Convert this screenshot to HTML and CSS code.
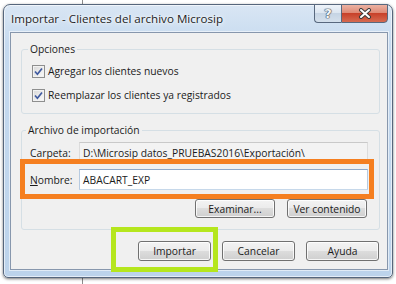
FILE: index.html
```html
<!DOCTYPE html>
<html lang="es">
<head>
    <meta charset="UTF-8">
    <title>Importar - Clientes del archivo Microsip</title>
    <link rel="stylesheet" href="styles.css">
</head>
<body>
    <div class="window">
        <div class="titlebar">
            <span class="title">Importar - Clientes del archivo Microsip</span>
            <div class="caption">
                <span class="cap-btn help">?</span>
                <span class="cap-btn close">
                    <svg width="14" height="11" viewBox="0 0 14 11">
                        <path d="M3 2 L11 9 M11 2 L3 9" stroke="#3a3a3a" stroke-width="4" stroke-linecap="round"/>
                        <path d="M3 2 L11 9 M11 2 L3 9" stroke="#fff" stroke-width="2" stroke-linecap="round"/>
                    </svg>
                </span>
            </div>
        </div>
        <div class="client">
            <fieldset class="group options">
                <legend>Opciones</legend>
                <label class="check">
                    <span class="box"><svg width="9" height="9" viewBox="0 0 9 9"><path d="M1 4.5 L3.4 7.2 L8 1.5" fill="none" stroke="#3f5aa0" stroke-width="1.7"/></svg></span>
                    Agregar los clientes nuevos
                </label>
                <label class="check">
                    <span class="box"><svg width="9" height="9" viewBox="0 0 9 9"><path d="M1 4.5 L3.4 7.2 L8 1.5" fill="none" stroke="#3f5aa0" stroke-width="1.7"/></svg></span>
                    Reemplazar los clientes ya registrados
                </label>
            </fieldset>
            <fieldset class="group file">
                <legend>Archivo de importación</legend>
                <div class="field-row">
                    <span class="field-label">Carpeta:</span>
                    <span class="input readonly">D:\Microsip datos_PRUEBAS2016\Exportación\</span>
                </div>
                <div class="field-row">
                    <span class="field-label"><u>N</u>ombre:</span>
                    <span class="input">ABACART_EXP</span>
                </div>
                <div class="row-buttons">
                    <button class="btn wide">Examinar...</button>
                    <button class="btn wide">Ver contenido</button>
                </div>
            </fieldset>
            <div class="dialog-buttons">
                <button class="btn">Importar</button>
                <button class="btn">Cancelar</button>
                <button class="btn">Ayuda</button>
            </div>
            <!-- marcas de resaltado sobre la captura -->
            <div class="mark orange"></div>
            <div class="mark green"></div>
        </div>
    </div>
</body>
</html>
```

FILE: styles.css
```css
* {
    box-sizing: border-box;
}
body {
    margin: 0;
    padding: 4px 3px 0;
    width: 396px;
    height: 284px;
    overflow: hidden;
    background: #ffffff linear-gradient(to right, transparent 82px, #8c8c8c 82px, #8c8c8c 83px, transparent 83px);
    font-family: "Open Sans", "Liberation Sans", sans-serif;
    font-size: 10.3px;
    color: #1b1b1b;
}
.window {
    width: 390px;
    height: 274px;
    display: flex;
    flex-direction: column;
    padding: 0 4px 7px 6px;
    border: 1px solid #56667c;
    border-radius: 7px 7px 5px 5px;
    background: linear-gradient(to bottom, #d9e6f4, #c6daef 40px, #bcd3eb);
    box-shadow: 0 1px 3px rgba(0, 0, 0, 0.55), inset 0 0 0 1px rgba(255, 255, 255, 0.6);
}
.titlebar {
    height: 27px;
    display: flex;
    align-items: flex-start;
}
.title {
    padding: 6px 0 0 1px;
    font-size: 11.6px;
    line-height: 16px;
    color: #1e1e1e;
    text-shadow: 0 0 6px #ffffff, 0 0 3px #ffffff;
}
.caption {
    display: flex;
    margin: -1px 0 0 auto;
}
.cap-btn {
    height: 19px;
    display: flex;
    align-items: center;
    justify-content: center;
    border: 1px solid #58687e;
}
.help {
    width: 27px;
    border-right: none;
    border-radius: 0 0 0 4px;
    background: linear-gradient(to bottom, #eef3f9, #dce6f1 45%, #c6d4e4 50%, #d4e0ec);
    font-family: "DejaVu Sans", sans-serif;
    font-weight: bold;
    font-size: 13px;
    line-height: 17px;
    color: #f4f6f8;
    text-shadow: 0 0 1px #46505f, 0 0 1px #46505f, 0 0 1px #46505f, 0 0 1px #46505f;
}
.close {
    width: 47px;
    border-radius: 0 0 4px 0;
    background: linear-gradient(to bottom, #ecb2a2, #df8a76 45%, #c8412a 50%, #d66a50);
}
.client {
    flex: 1;
    position: relative;
    padding: 9px 7px 0 10px;
    background: #f0f0f0;
    border: 1px solid #8797ad;
    box-shadow: 0 0 0 1px rgba(255, 255, 255, 0.55);
}
.group {
    margin: 0;
    min-width: 0;
    border: 1px solid #d5dfe5;
    border-radius: 3px;
    padding: 0 10px 10px 10px;
}
.group legend {
    margin-left: -4px;
    padding: 0 2px;
    line-height: 14px;
}
.options {
    display: flex;
    flex-direction: column;
    gap: 8px;
    padding-top: 7px;
}
.check {
    display: flex;
    align-items: center;
    gap: 3px;
    height: 16px;
}
.box {
    width: 13px;
    height: 13px;
    display: flex;
    align-items: center;
    justify-content: center;
    border: 1px solid #8e8f8f;
    background: linear-gradient(135deg, #d8d8d8, #fbfbfb);
    box-shadow: inset 0 0 0 1px #f2f2f2;
}
.file {
    margin-top: 9px;
    padding: 5px 11px 11px 8px;
}
.field-row {
    display: flex;
    align-items: center;
    height: 21px;
}
.field-row + .field-row {
    margin-top: 6px;
}
.field-label {
    width: 49px;
    flex-shrink: 0;
}
.input {
    flex: 1;
    height: 100%;
    display: flex;
    align-items: center;
    padding-left: 3px;
    background: #ffffff;
    border: 1px solid;
    border-color: #8ea8c8 #b7cbe1 #c6d8ea #b7cbe1;
}
.readonly {
    background: #f3f3f3;
    border-color: #c9c9c9 #dcdcdc #e2e2e2 #dcdcdc;
}
.row-buttons {
    display: flex;
    justify-content: flex-end;
    gap: 12px;
    margin-top: 9px;
    padding-right: 1px;
}
.btn {
    width: 73px;
    height: 20px;
    padding: 0;
    font: inherit;
    color: #1b1b1b;
    border: 1px solid #707070;
    border-radius: 3px;
    background: linear-gradient(to bottom, #f3f3f3, #ebebeb 50%, #dddddd 50%, #cfcfcf);
    box-shadow: inset 0 0 0 1px rgba(255, 255, 255, 0.8);
}
.row-buttons .btn {
    width: 80px;
    height: 19px;
}
.dialog-buttons {
    display: flex;
    justify-content: flex-end;
    gap: 11px;
    margin-top: 11px;
    padding-right: 1px;
}
.mark {
    position: absolute;
    border: 5px solid;
}
.orange {
    left: 9px;
    top: 126px;
    width: 354px;
    height: 40px;
    border-color: #f57f20;
}
.green {
    left: 100px;
    top: 194px;
    width: 107px;
    height: 45px;
    border-color: #b5e61d;
}
```
